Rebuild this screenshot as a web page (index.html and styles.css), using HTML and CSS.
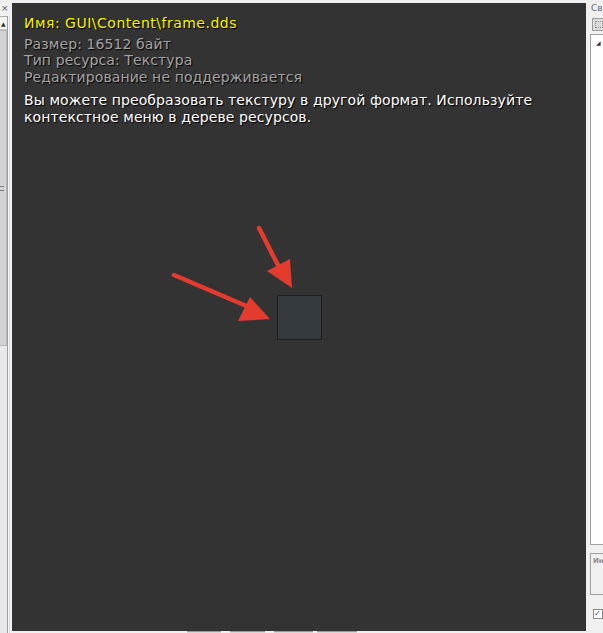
FILE: index.html
```html
<!DOCTYPE html>
<html lang="ru">
<head>
    <meta charset="UTF-8">
    <title>Ресурс - frame.dds</title>
    <link rel="stylesheet" href="styles.css">
</head>
<body>

    <!-- Left dock (resource tree, clipped) -->
    <div class="left-dock">
        <div class="dock-close">×</div>
        <div class="dock-body">
            <div class="vscroll">
                <div class="vscroll-btn">▲</div>
                <div class="vscroll-thumb"><span class="grip"></span></div>
            </div>
            <div class="dock-edge"></div>
        </div>
    </div>

    <!-- Resource viewer -->
    <div class="viewer">
        <div class="info">
            <div class="res-name">Имя: GUI\Content\frame.dds</div>
            <div class="res-meta">
                <div>Размер: 16512 байт</div>
                <div>Тип ресурса: Текстура</div>
                <div>Редактирование не поддерживается</div>
            </div>
            <p class="res-note">Вы можете преобразовать текстуру в другой формат. Используйте контекстное меню в дереве ресурсов.</p>
        </div>

        <div class="preview">
            <div class="texture"></div>
        </div>

        <svg class="arrows" width="574" height="628" viewBox="0 0 574 628">
            <g stroke="#e33b2e" stroke-width="4.5" stroke-linecap="round" fill="none">
                <line x1="162" y1="272" x2="246" y2="308"/>
                <line x1="247" y1="225" x2="270" y2="270"/>
            </g>
            <g fill="#e33b2e">
                <polygon points="238,294 226,318 258,316"/>
                <polygon points="255,268 278,256 280,285"/>
            </g>
        </svg>
    </div>

    <!-- Right dock (properties, clipped) -->
    <div class="right-dock">
        <div class="props-title">Св</div>
        <div class="props-tool"><span></span></div>
        <div class="props-grid"><span class="expander">◢</span></div>
        <div class="props-desc">Ин</div>
        <div class="props-check">✓</div>
    </div>

    <!-- Bottom buttons (clipped) -->
    <div class="bottom-bar">
        <span class="btn b1"></span>
        <span class="btn b2"></span>
        <span class="btn b3"></span>
        <span class="btn b4"></span>
    </div>

</body>
</html>
```

FILE: styles.css
```css
* {
    margin: 0;
    padding: 0;
    box-sizing: border-box;
}

body {
    font-family: "DejaVu Sans", Verdana, sans-serif;
    background-color: #f0f0f0;
    width: 603px;
    height: 633px;
    display: flex;
    overflow: hidden;
    position: relative;
}

/* ---- left dock ---- */
.left-dock {
    width: 12px;
    height: 100%;
    display: flex;
    flex-direction: column;
}

.dock-close {
    height: 16px;
    font-size: 9px;
    line-height: 16px;
    color: #555;
    padding-left: 1px;
}

.dock-body {
    flex: 1;
    display: flex;
}

.vscroll {
    width: 7px;
    background-color: #e8e8e8;
    border-top: 1px solid #a9a9a9;
    display: flex;
    flex-direction: column;
}

.vscroll-btn {
    height: 13px;
    font-size: 6px;
    line-height: 13px;
    color: #333;
    text-indent: 1px;
    background-color: #f4f4f4;
    border-bottom: 1px solid #c8c8c8;
}

.vscroll-thumb {
    height: 316px;
    background-color: #d4d4d4;
    border: 1px solid #b4b4b4;
    border-left: none;
    display: flex;
    align-items: center;
}

.grip {
    width: 4px;
    height: 5px;
    border-top: 1px solid #777;
    border-bottom: 1px solid #777;
}

.dock-edge {
    width: 5px;
    border-left: 1px solid #a0a0a0;
    background: linear-gradient(to right, #f6f6f6 0 1px, #d9dbe8 1px 2px, #f2f2f2 2px);
}

/* ---- viewer ---- */
.viewer {
    width: 574px;
    height: 628px;
    margin-top: 3px;
    background-color: #333333;
    position: relative;
    flex-shrink: 0;
}

.info {
    padding: 12px 12px 0 12px;
    font-size: 14px;
    letter-spacing: 0.1px;
    line-height: 16.5px;
    text-shadow: 1px 1px 1px #000;
}

.res-name {
    color: #f5f500;
    letter-spacing: 0.5px;
    margin-bottom: 4px;
}

.res-meta {
    color: #a4a4a4;
    margin-bottom: 7px;
}

.res-note {
    color: #ffffff;
    width: 545px;
}

.preview {
    position: absolute;
    inset: 0;
    display: flex;
    align-items: center;
    justify-content: center;
}

.texture {
    width: 45px;
    height: 45px;
    background-color: #353a3e;
    border: 1px solid #1e1e1e;
}

.arrows {
    position: absolute;
    left: 0;
    top: 0;
}

/* ---- right dock ---- */
.right-dock {
    flex: 1;
    display: flex;
    flex-direction: column;
    padding-left: 4px;
}

.props-title {
    font-size: 9px;
    line-height: 17px;
    color: #6a6a8a;
    padding-left: 1px;
}

.props-tool {
    width: 14px;
    height: 13px;
    margin-top: 1px;
    margin-left: 2px;
    background-color: #dcdcdc;
    border: 1px solid #9c9c9c;
    padding: 2px;
}

.props-tool span {
    display: block;
    width: 100%;
    height: 100%;
    border: 1px dotted #888;
}

.props-grid {
    margin-top: 3px;
    height: 511px;
    background-color: #ffffff;
    border: 1px solid #a0a0a0;
    border-right: none;
    font-size: 6px;
    color: #333;
    padding: 4px 0 0 5px;
}

.props-desc {
    margin-top: 8px;
    height: 42px;
    border: 1px solid #a0a0a0;
    border-right: none;
    font-size: 7px;
    font-weight: bold;
    color: #8a8a8a;
    padding: 3px 0 0 2px;
}

.props-check {
    margin-top: 14px;
    margin-left: 3px;
    width: 10px;
    height: 10px;
    border: 1px solid #8a8a8a;
    background-color: #fff;
    font-size: 8px;
    line-height: 8px;
    color: #2848a8;
}

/* ---- bottom strip ---- */
.bottom-bar {
    position: absolute;
    left: 12px;
    right: 17px;
    bottom: 0;
    height: 2px;
    display: flex;
}

.btn {
    height: 2px;
    background-color: #d8d8d8;
    border-top: 1px solid #9a9a9a;
}

.b1 { margin-left: 175px; width: 34px; }
.b2 { margin-left: 9px;  width: 35px; }
.b3 { margin-left: 9px;  width: 39px; }
.b4 { margin-left: 4px;  width: 40px; }
```
